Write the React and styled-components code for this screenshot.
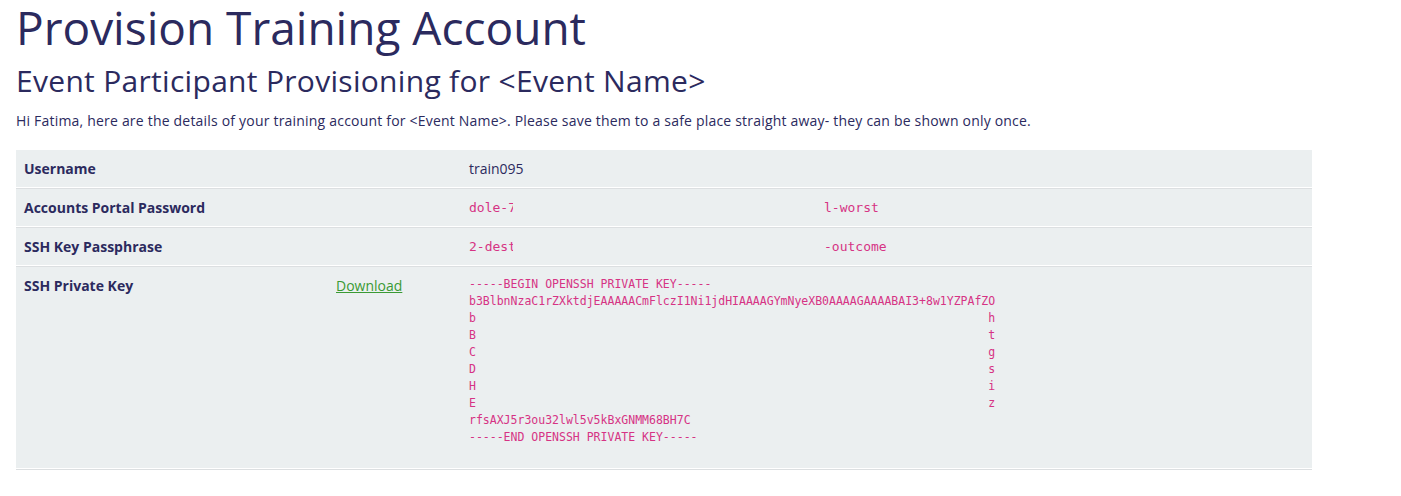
import React from 'react';
import styled, { createGlobalStyle } from 'styled-components';

const GlobalStyle = createGlobalStyle`
  body {
    margin: 0;
    background: #fff;
    font-family: "Open Sans", Lato, sans-serif;
    color: #2b2a5e;
  }
`;

const Page = styled.div`
  padding: 0 16px;
`;

const Title = styled.h1`
  margin: 0;
  font-size: 46px;
  font-weight: 400;
  line-height: 54px;
  color: #2b2a5e;
`;

const Subtitle = styled.h2`
  margin: 7px 0 0;
  font-size: 30px;
  font-weight: 400;
  line-height: 40px;
  letter-spacing: 0.3px;
  color: #2b2a5e;
`;

const Intro = styled.p`
  margin: 8px 0 0;
  font-size: 14px;
  line-height: 24px;
  letter-spacing: 0.2px;
`;

const Table = styled.div`
  margin-top: 17px;
  width: 1296px;
`;

const Row = styled.div`
  display: grid;
  grid-template-columns: 312px 133px 1fr;
  background: #ebeff0;
  border-bottom: 1px solid #dcdfe1;
  box-shadow: inset 0 -1px 0 #fff;
  min-height: ${p => p.$tall ? '201px' : '37px'};
  padding-bottom: 1px;
  box-sizing: content-box;
`;

const Cell = styled.div`
  padding: 9px 8px;
  font-size: 14px;
  line-height: 19px;
`;

const Label = styled(Cell)`
  font-weight: 700;
`;

const Download = styled.a`
  color: #3a9a34;
  text-decoration: underline;
  cursor: pointer;
`;

const Masked = styled.div`
  display: flex;
  font-family: "DejaVu Sans Mono", monospace;
  font-size: 13px;
  color: #d63384;
`;

const Head = styled.span`
  display: inline-block;
  width: ${p => p.$w}px;
  overflow: hidden;
  white-space: nowrap;
`;

const Gap = styled.span`
  display: inline-block;
  width: ${p => p.$w}px;
`;

const Key = styled.pre`
  margin: 0;
  font-family: "DejaVu Sans Mono", monospace;
  font-size: 11.5px;
  line-height: 17px;
  color: #d63384;
`;

const pad = (a, b) => a + ' '.repeat(74) + b;

const keyText = [
  '-----BEGIN OPENSSH PRIVATE KEY-----',
  'b3BlbnNzaC1rZXktdjEAAAAACmFlczI1Ni1jdHIAAAAGYmNyeXB0AAAAGAAAABAI3+8w1YZPAfZO',
  pad('b', 'h'),
  pad('B', 't'),
  pad('C', 'g'),
  pad('D', 's'),
  pad('H', 'i'),
  pad('E', 'z'),
  'rfsAXJ5r3ou32lwl5v5kBxGNMM68BH7C',
  '-----END OPENSSH PRIVATE KEY-----',
].join('\n');

const App = () => (
  <Page>
    <GlobalStyle />
    <Title>Provision Training Account</Title>
    <Subtitle>Event Participant Provisioning for &lt;Event Name&gt;</Subtitle>
    <Intro>
      Hi Fatima, here are the details of your training account for &lt;Event Name&gt;. Please save them to a safe place straight away- they can be shown only once.
    </Intro>
    <Table>
      <Row>
        <Label>Username</Label>
        <Cell />
        <Cell>train095</Cell>
      </Row>
      <Row>
        <Label>Accounts Portal Password</Label>
        <Cell />
        <Cell>
          <Masked>
            <Head $w={44}>dole-7</Head>
            <Gap $w={311} />
            <span>l-worst</span>
          </Masked>
        </Cell>
      </Row>
      <Row>
        <Label>SSH Key Passphrase</Label>
        <Cell />
        <Cell>
          <Masked>
            <Head $w={44}>2-dest</Head>
            <Gap $w={311} />
            <span>-outcome</span>
          </Masked>
        </Cell>
      </Row>
      <Row $tall>
        <Label>SSH Private Key</Label>
        <Cell><Download>Download</Download></Cell>
        <Cell><Key>{keyText}</Key></Cell>
      </Row>
    </Table>
  </Page>
);

export default App;
